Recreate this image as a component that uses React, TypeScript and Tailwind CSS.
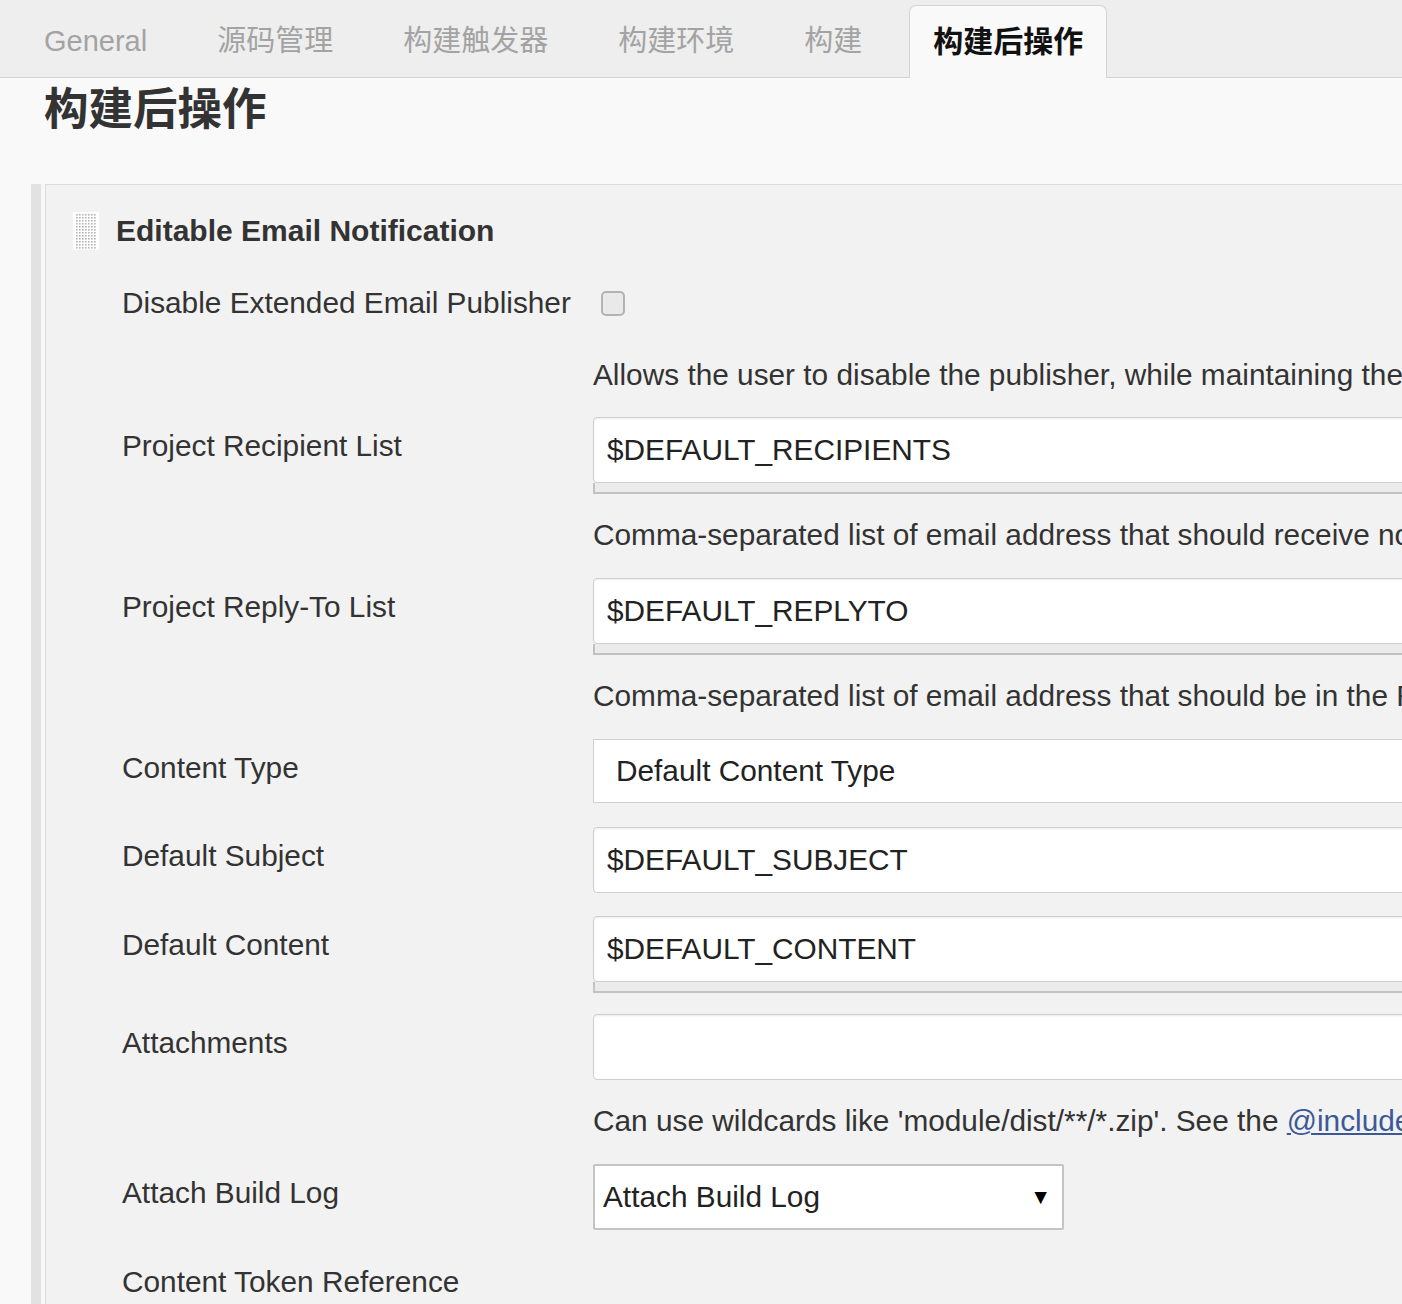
import type { ReactNode } from "react";

const tabs = ["General", "源码管理", "构建触发器", "构建环境", "构建"];

function Handle() {
  const dots: ReactNode[] = [];
  for (let r = 0; r < 12; r++) {
    for (let c = 0; c < 7; c++) {
      dots.push(
        <rect key={`${r}-${c}`} x={3 + c * 3} y={2 + r * 3} width={1.6} height={1.6} fill="#b5b5b5" />
      );
    }
  }
  return (
    <svg width="26" height="38" viewBox="0 0 26 38" className="shrink-0">
      <rect width="26" height="38" fill="#ffffff" />
      {dots}
    </svg>
  );
}

function Row({ label, mt, children }: { label?: string; mt: string; children?: ReactNode }) {
  return (
    <div className={`grid grid-cols-[471px_1fr] ${mt}`}>
      <div className="pt-[12px] text-[29.8px] leading-[34px] text-[#333]">{label}</div>
      <div>{children}</div>
    </div>
  );
}

function TextBox({ value, grip }: { value?: string; grip?: boolean }) {
  return (
    <div>
      <div className="flex h-[66px] items-center rounded-[4px] border border-[#cfcfcf] bg-white pl-[13px] text-[29.8px] text-[#222] shadow-[inset_0_1px_2px_rgba(0,0,0,0.08)]">
        {value}
      </div>
      {grip && <div className="h-[11px] border-b-2 border-l-2 border-[#c2c2c2] bg-[#ebebeb]" />}
    </div>
  );
}

function Desc({ mt, children }: { mt: string; children: ReactNode }) {
  return (
    <div className={`grid grid-cols-[471px_1fr] ${mt}`}>
      <div />
      <div className="whitespace-nowrap text-[29.8px] leading-[40px] text-[#333]">{children}</div>
    </div>
  );
}

export default function App() {
  return (
    <div className="h-[1304px] w-full overflow-hidden bg-[#f9f9f9] font-['Liberation_Sans',Arial,'Noto_Sans_CJK_SC',sans-serif]">
      <div className="w-[1700px]">
        {/* Tabs */}
        <div className="flex h-[78px] items-end gap-[24px] border-b border-[#d4d4d4] bg-[#eeeeee] pl-[21px]">
          {tabs.map((t) => (
            <div key={t} className="flex h-[72px] items-center px-[23px] text-[29px] leading-none text-[#a3a3a3]">
              {t}
            </div>
          ))}
          <div className="-mb-px flex h-[73px] items-center rounded-t-[7px] border border-b-0 border-[#d4d4d4] bg-[#f9f9f9] px-[23px] text-[30px] font-bold leading-none text-[#111]">
            构建后操作
          </div>
        </div>

        {/* Heading */}
        <h1 className="mt-[6px] pl-[44px] font-['Noto_Sans_CJK_SC',sans-serif] text-[44.5px] font-bold leading-[44px] text-[#333]">
          构建后操作
        </h1>

        {/* Section */}
        <div className="mt-[56px] ml-[31px] flex">
          <div className="w-[10px] shrink-0 bg-[#e2e2e2]" />
          <div className="w-[4px] shrink-0 bg-[#f7f7f7]" />
          <div className="h-[1200px] flex-1 border-l border-t border-[#dcdcdc] bg-[#f2f2f2] pl-[76px]">
            <div className="-ml-[49px] flex items-center gap-[17px] pt-[27px]">
              <Handle />
              <span className="text-[30px] font-bold leading-[38px] text-[#333]">Editable Email Notification</span>
            </div>

            <div className="mt-[36px] grid grid-cols-[471px_1fr]">
              <div className="text-[29.8px] leading-[34px] text-[#333]">Disable Extended Email Publisher</div>
              <div className="flex items-center pl-[8px]">
                <div className="h-[25px] w-[24px] rounded-[5px] border-2 border-[#b3b3b3] bg-[#e9e9e9]" />
              </div>
            </div>

            <Desc mt="mt-[35px]">Allows the user to disable the publisher, while maintaining the settings</Desc>

            <Row label="Project Recipient List" mt="mt-[22px]">
              <TextBox value="$DEFAULT_RECIPIENTS" grip />
            </Row>

            <Desc mt="mt-[21px]">Comma-separated list of email address that should receive notifications for this project.</Desc>

            <Row label="Project Reply-To List" mt="mt-[23px]">
              <TextBox value="$DEFAULT_REPLYTO" grip />
            </Row>

            <Desc mt="mt-[21px]">Comma-separated list of email address that should be in the Reply-To header for this project.</Desc>

            <Row label="Content Type" mt="mt-[23px]">
              <div className="flex h-[64px] items-center border border-[#cfcfcf] bg-white pl-[22px] text-[29.8px] text-[#222]">
                Default Content Type
              </div>
            </Row>

            <Row label="Default Subject" mt="mt-[24px]">
              <TextBox value="$DEFAULT_SUBJECT" />
            </Row>

            <Row label="Default Content" mt="mt-[23px]">
              <TextBox value="$DEFAULT_CONTENT" grip />
            </Row>

            <Row label="Attachments" mt="mt-[21px]">
              <TextBox />
            </Row>

            <Desc mt="mt-[21px]">
              Can use wildcards like 'module/dist/**/*.zip'. See the{" "}
              <span className="text-[#3b5998] underline">@includes of Ant fileset</span> for the exact format.
            </Desc>

            <Row label="Attach Build Log" mt="mt-[23px]">
              <div className="flex h-[66px] w-[471px] items-center justify-between rounded-[2px] border-2 border-[#c4c4c4] bg-white pl-[8px] pr-[11px] text-[29.8px] text-[#222]">
                <span>Attach Build Log</span>
                <span className="text-[21px] text-black">▼</span>
              </div>
            </Row>

            <Row label="Content Token Reference" mt="mt-[23px]" />
          </div>
        </div>
      </div>
    </div>
  );
}
